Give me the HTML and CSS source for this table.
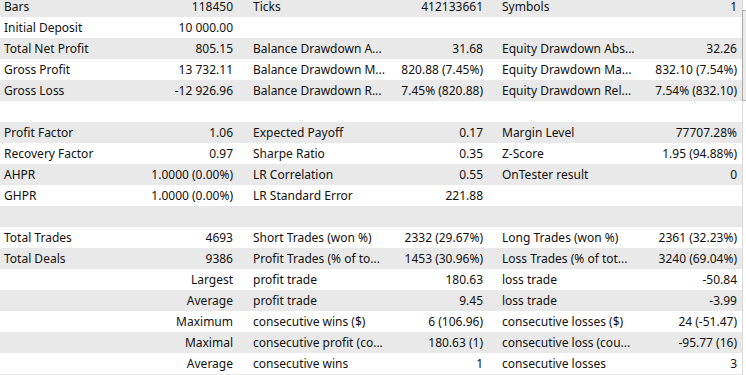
FILE: index.html
```html
<!DOCTYPE html>
<html>
<head>
<meta charset="utf-8">
<link rel="stylesheet" href="styles.css">
</head>
<body>
<div class="window">
  <div class="report">
    <div class="row"><span class="lbl">Bars</span><span class="val">118450</span><span class="lbl">Ticks</span><span class="val">412133661</span><span class="lbl">Symbols</span><span class="val">1</span></div>
    <div class="row"><span class="lbl">Initial Deposit</span><span class="val">10 000.00</span><span class="lbl"></span><span class="val"></span><span class="lbl"></span><span class="val"></span></div>
    <div class="row"><span class="lbl">Total Net Profit</span><span class="val">805.15</span><span class="lbl">Balance Drawdown A...</span><span class="val">31.68</span><span class="lbl">Equity Drawdown Abs...</span><span class="val">32.26</span></div>
    <div class="row"><span class="lbl">Gross Profit</span><span class="val">13 732.11</span><span class="lbl">Balance Drawdown M...</span><span class="val">820.88 (7.45%)</span><span class="lbl">Equity Drawdown Ma...</span><span class="val">832.10 (7.54%)</span></div>
    <div class="row"><span class="lbl">Gross Loss</span><span class="val">-12 926.96</span><span class="lbl">Balance Drawdown R...</span><span class="val">7.45% (820.88)</span><span class="lbl">Equity Drawdown Rel...</span><span class="val">7.54% (832.10)</span></div>
    <div class="row"><span class="lbl"></span><span class="val"></span><span class="lbl"></span><span class="val"></span><span class="lbl"></span><span class="val"></span></div>
    <div class="row"><span class="lbl">Profit Factor</span><span class="val">1.06</span><span class="lbl">Expected Payoff</span><span class="val">0.17</span><span class="lbl">Margin Level</span><span class="val">77707.28%</span></div>
    <div class="row"><span class="lbl">Recovery Factor</span><span class="val">0.97</span><span class="lbl">Sharpe Ratio</span><span class="val">0.35</span><span class="lbl">Z-Score</span><span class="val">1.95 (94.88%)</span></div>
    <div class="row"><span class="lbl">AHPR</span><span class="val">1.0000 (0.00%)</span><span class="lbl">LR Correlation</span><span class="val">0.55</span><span class="lbl">OnTester result</span><span class="val">0</span></div>
    <div class="row"><span class="lbl">GHPR</span><span class="val">1.0000 (0.00%)</span><span class="lbl">LR Standard Error</span><span class="val">221.88</span><span class="lbl"></span><span class="val"></span></div>
    <div class="row"><span class="lbl"></span><span class="val"></span><span class="lbl"></span><span class="val"></span><span class="lbl"></span><span class="val"></span></div>
    <div class="row"><span class="lbl">Total Trades</span><span class="val">4693</span><span class="lbl">Short Trades (won %)</span><span class="val">2332 (29.67%)</span><span class="lbl">Long Trades (won %)</span><span class="val">2361 (32.23%)</span></div>
    <div class="row"><span class="lbl">Total Deals</span><span class="val">9386</span><span class="lbl">Profit Trades (% of to...</span><span class="val">1453 (30.96%)</span><span class="lbl">Loss Trades (% of tot...</span><span class="val">3240 (69.04%)</span></div>
    <div class="row"><span class="lbl"></span><span class="val">Largest</span><span class="lbl">profit trade</span><span class="val">180.63</span><span class="lbl">loss trade</span><span class="val">-50.84</span></div>
    <div class="row"><span class="lbl"></span><span class="val">Average</span><span class="lbl">profit trade</span><span class="val">9.45</span><span class="lbl">loss trade</span><span class="val">-3.99</span></div>
    <div class="row"><span class="lbl"></span><span class="val">Maximum</span><span class="lbl">consecutive wins ($)</span><span class="val">6 (106.96)</span><span class="lbl">consecutive losses ($)</span><span class="val">24 (-51.47)</span></div>
    <div class="row"><span class="lbl"></span><span class="val">Maximal</span><span class="lbl">consecutive profit (co...</span><span class="val">180.63 (1)</span><span class="lbl">consecutive loss (cou...</span><span class="val">-95.77 (16)</span></div>
    <div class="row"><span class="lbl"></span><span class="val">Average</span><span class="lbl">consecutive wins</span><span class="val">1</span><span class="lbl">consecutive losses</span><span class="val">3</span></div>
    <div class="row"><span class="lbl"></span><span class="val"></span><span class="lbl"></span><span class="val"></span><span class="lbl"></span><span class="val"></span></div>
  </div>
  <div class="scrollbar"><div class="thumb"></div></div>
</div>
</body>
</html>
```
FILE: styles.css
```css
html, body {
  margin: 0;
  padding: 0;
  background: #ffffff;
  overflow: hidden;
}
body {
  width: 746px;
  height: 375px;
}
.window {
  display: flex;
  width: 746px;
  height: 375px;
  overflow: hidden;
  font-family: "Noto Sans", "Open Sans", "Liberation Sans", sans-serif;
  font-size: 12px;
  color: #111111;
}
.report {
  width: 742px;
  margin-top: -4px;
  flex: none;
}
.row {
  display: grid;
  grid-template-columns: 135px 114px 140px 109px 140px 104px;
  height: 21px;
  line-height: 21px;
  background: #ffffff;
}
.row:nth-child(odd) {
  background: #e9e9e9;
}
.lbl, .val {
  white-space: nowrap;
  overflow: hidden;
}
.lbl {
  padding-left: 4px;
}
.val {
  text-align: right;
}
.val:nth-child(2) { padding-right: 16px; }
.val:nth-child(4) { padding-right: 15px; }
.val:nth-child(6) { padding-right: 5px; }
.scrollbar {
  flex: 1;
  border-left: 1px solid #dadada;
  background: #ffffff;
}
.thumb {
  margin-top: 10px;
  margin-left: -1px;
  height: 89px;
  border-left: 1px solid #a8a8a8;
  border-top: 1px solid #b5b5b5;
  border-bottom: 1px solid #b5b5b5;
  background: #ebebeb;
}
```
